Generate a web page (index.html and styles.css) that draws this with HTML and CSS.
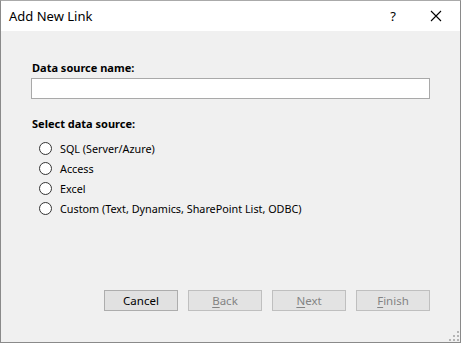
FILE: index.html
```html
<!DOCTYPE html>
<html>
<head>
<meta charset="utf-8">
<link rel="stylesheet" href="styles.css">
</head>
<body>
<div class="window">
  <div class="titlebar">
    <span class="title">Add New Link</span>
    <span class="help">?</span>
    <span class="close"><svg width="12" height="12" viewBox="0 0 12 12"><path d="M1 1L11 11M11 1L1 11" stroke="#000" stroke-width="1.1" fill="none"/></svg></span>
  </div>
  <div class="body">
    <div class="label">Data source name:</div>
    <div class="input"></div>
    <div class="label second">Select data source:</div>
    <div class="radios">
      <div class="radio"><span class="circle"></span><span>SQL (Server/Azure)</span></div>
      <div class="radio"><span class="circle"></span><span>Access</span></div>
      <div class="radio"><span class="circle"></span><span>Excel</span></div>
      <div class="radio"><span class="circle"></span><span>Custom (Text, Dynamics, SharePoint List, ODBC)</span></div>
    </div>
    <div class="spacer"></div>
    <div class="buttons">
      <div class="btn">Cancel</div>
      <div class="btn disabled"><u>B</u>ack</div>
      <div class="btn disabled"><u>N</u>ext</div>
      <div class="btn disabled"><u>F</u>inish</div>
    </div>
    <div class="grip">
      <svg width="10" height="10" viewBox="0 0 10 10">
        <rect x="8" y="0" width="2" height="2" fill="#b4b4b4"/>
        <rect x="4" y="4" width="2" height="2" fill="#b4b4b4"/>
        <rect x="8" y="4" width="2" height="2" fill="#b4b4b4"/>
        <rect x="0" y="8" width="2" height="2" fill="#b4b4b4"/>
        <rect x="4" y="8" width="2" height="2" fill="#b4b4b4"/>
        <rect x="8" y="8" width="2" height="2" fill="#b4b4b4"/>
      </svg>
    </div>
  </div>
</div>
</body>
</html>
```
FILE: styles.css
```css
* { box-sizing: border-box; }
html, body { margin: 0; padding: 0; }
body {
  width: 461px;
  height: 343px;
  font-family: "Noto Sans", "Open Sans", sans-serif;
  font-size: 10.8px;
  color: #000;
  overflow: hidden;
}
.window {
  width: 461px;
  height: 343px;
  border: 1px solid #8a8a8a;
  border-top-color: #aaaaaa;
  display: flex;
  flex-direction: column;
  background: #f0f0f0;
}
.titlebar {
  height: 30px;
  background: #fff;
  display: flex;
  align-items: center;
  padding-left: 8px;
}
.title {
  flex: 1;
  font-size: 13px;
}
.help {
  font-size: 13px;
  width: 20px;
  margin-right: 27px;
  text-align: center;
}
.close {
  width: 12px;
  margin-right: 18px;
  display: flex;
}
.body {
  flex: 1;
  position: relative;
  display: flex;
  flex-direction: column;
  padding: 29px 30px 0 30px;
}
.label {
  font-weight: bold;
  line-height: 16px;
  padding-left: 1px;
  font-size: 11px;
}
.label.second { margin-top: 17px; }
.input {
  margin-top: 2px;
  height: 21px;
  background: #fff;
  border: 1px solid #a9a9a9;
}
.radios {
  margin-top: 6px;
  padding-left: 8px;
  display: flex;
  flex-direction: column;
}
.radio {
  height: 20px;
  display: flex;
  align-items: center;
}
.circle {
  width: 13px;
  height: 13px;
  border: 1px solid #333;
  border-radius: 50%;
  background: #fff;
  margin-right: 8px;
}
.spacer { flex: 1; }
.buttons {
  display: flex;
  justify-content: flex-end;
  gap: 10px;
  padding-right: 0;
  margin-bottom: 31px;
}
.btn {
  width: 74px;
  height: 21px;
  background: #e1e1e1;
  border: 1px solid #adadad;
  display: flex;
  align-items: center;
  justify-content: center;
  font-size: 11.5px;
}
.btn.disabled {
  background: #e3e3e3;
  border-color: #bfbfbf;
  color: #838383;
}
.btn u { text-decoration: underline; text-underline-offset: 2px; }
.grip {
  position: absolute;
  right: 1px;
  bottom: 1px;
  display: flex;
}
```
